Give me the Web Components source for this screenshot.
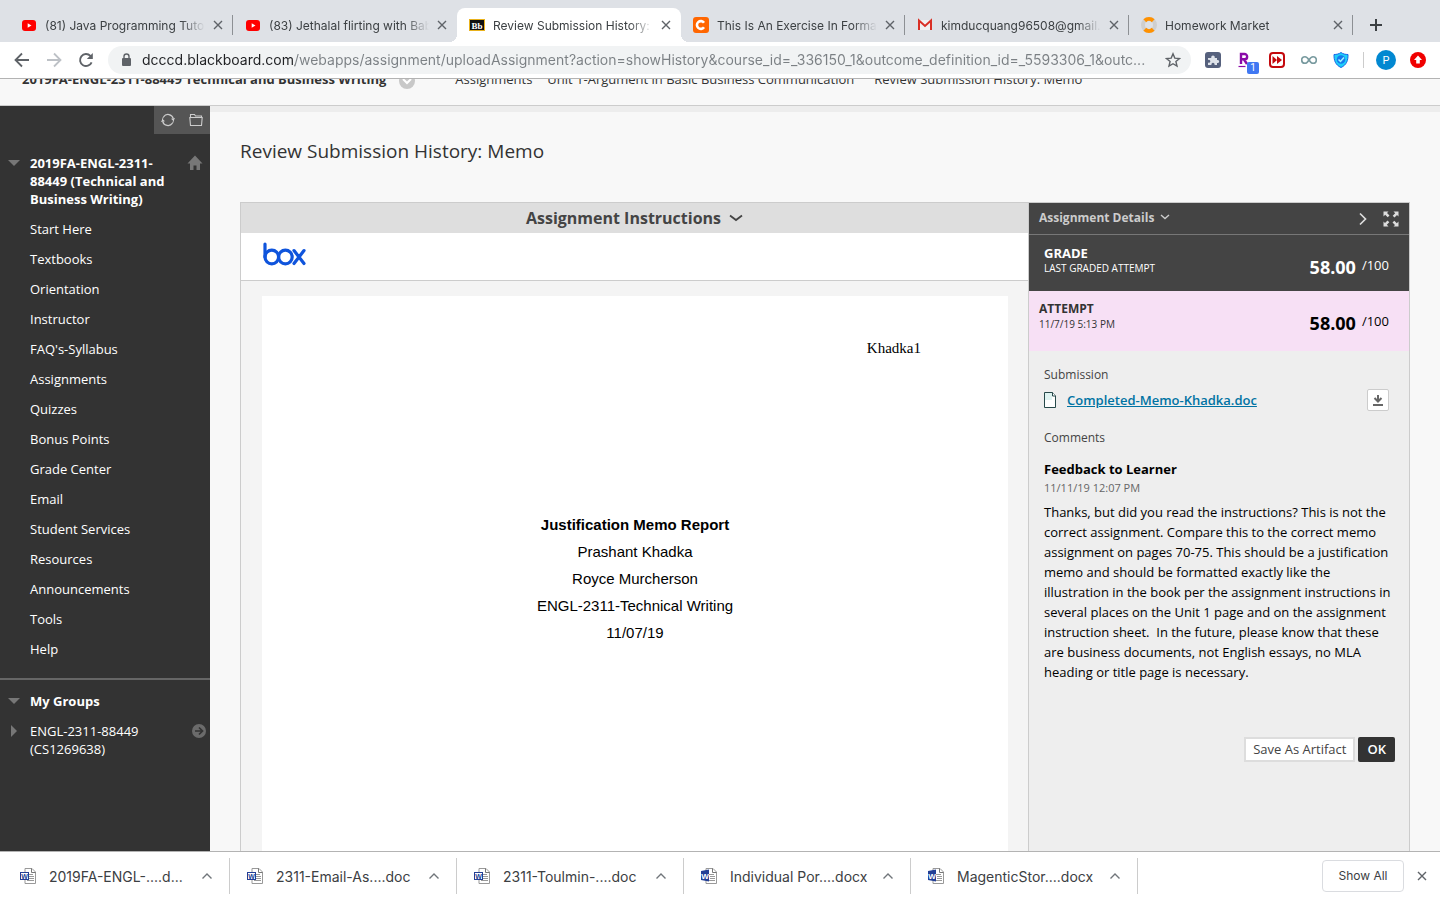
<!DOCTYPE html>
<html lang="en">
<head>
<meta charset="utf-8">
<title>Review Submission History: Memo</title>
<style>
  html, body {
    height: 100%;
    margin: 0;
  }
  body {
    display: flex;
    flex-direction: column;
    overflow: hidden;
    background: #f8f8f8;
    color: #333;
    font-family: "Open Sans", sans-serif;
    font-size: 13px;
    --ui-font: Inter, Roboto, sans-serif;
    --line: #ccc;
  }
  /* no divider next to the active tab */
  browser-tab:has(+ [active]) {
    background: none;
  }
  .viewport {
    flex: 1;
    min-height: 0;
    display: flex;
    flex-direction: column;
    overflow: hidden;
  }
  .columns {
    flex: 1;
    min-height: 0;
    display: flex;
  }
  .content {
    flex: 1;
    min-width: 0;
    display: flex;
    flex-direction: column;
    border-top: 6px solid #ededed;
    padding: 0 30px;
  }
  .content h1 {
    margin: 24px 0 36px;
    font-size: 19px;
    line-height: 30px;
    font-weight: 400;
  }
  .panel {
    flex: 1;
    min-height: 0;
    display: flex;
    border: 1px solid var(--line);
    border-bottom: 0;
  }
</style>
</head>
<body>
  <tab-strip>
    <browser-tab icon="youtube">(81) Java Programming Tuto</browser-tab>
    <browser-tab icon="youtube">(83) Jethalal flirting with Bab</browser-tab>
    <browser-tab icon="bb" active>Review Submission History:</browser-tab>
    <browser-tab icon="chegg">This Is An Exercise In Format</browser-tab>
    <browser-tab icon="gmail">kimducquang96508@gmail.</browser-tab>
    <browser-tab icon="ring">Homework Market</browser-tab>
  </tab-strip>
  <browser-toolbar></browser-toolbar>

  <div class="viewport">
    <course-crumbs></course-crumbs>
    <div class="columns">
      <course-menu></course-menu>
      <main class="content">
        <h1>Review Submission History: Memo</h1>
        <div class="panel">
          <document-viewer>
            <span slot="header">Khadka1</span>
            <strong>Justification Memo Report</strong>
            <span>Prashant Khadka</span>
            <span>Royce Murcherson</span>
            <span>ENGL-2311-Technical Writing</span>
            <span>11/07/19</span>
          </document-viewer>
          <attempt-details>Thanks, but did you read the instructions? This is not the correct assignment. Compare this to the correct memo assignment on pages 70-75. This should be a justification memo and should be formatted exactly like the illustration in the book per the assignment instructions in several places on the Unit 1 page and on the assignment instruction sheet.&nbsp; In the future, please know that these are business documents, not English essays, no MLA heading or title page is necessary.</attempt-details>
        </div>
      </main>
    </div>
  </div>

  <download-shelf>
    <download-item kind="doc">2019FA-ENGL-....d...</download-item>
    <download-item kind="doc">2311-Email-As....doc</download-item>
    <download-item kind="doc">2311-Toulmin-....doc</download-item>
    <download-item kind="docx">Individual Por....docx</download-item>
    <download-item kind="docx">MagenticStor....docx</download-item>
  </download-shelf>

<script>
const sheet = `
  <path d="M5 .5h7l3.500 3.500v11.500H5z" fill="#fff" stroke="#999"/>
  <path d="M11.500.5v4h4" fill="none" stroke="#777"/>
  <path d="M7 6.500h6M9 8.500h5M9 10.500h5M7 12.500h7" stroke="#999"/>`;

// [viewBox, markup]
const ICONS = {
  youtube: ["0 0 16 16", `
    <rect x="1" y="3" width="14" height="11" rx="3" fill="#f00"/>
    <path d="M6.700 6.300v4.400L10.500 8.500z" fill="#fff"/>`],
  bb: ["0 0 16 16", `
    <rect x=".5" y="2.500" width="15" height="11" fill="#111" stroke="#e9b21c"/>
    <text x="8" y="11.500" text-anchor="middle" font-family="Liberation Serif, serif" font-weight="700" font-size="9" fill="#fff">Bb</text>`],
  chegg: ["0 0 16 16", `
    <rect width="16" height="16" rx="3" fill="#f60"/>
    <path d="M11 5.700A3.900 3.900 0 1 0 11 10.300" fill="none" stroke="#fff" stroke-width="2.600"/>`],
  gmail: ["0 0 16 16", `
    <path d="M1 3h14v10H1z" fill="#f1f1f1"/>
    <path d="M2 13V3.500L8 9l6-5.500V13" fill="none" stroke="#d93025" stroke-width="2"/>`],
  ring: ["0 0 16 16", `
    <circle cx="8" cy="8" r="6" fill="none" stroke="#cfcfcf" stroke-width="4"/>
    <path d="M3.800 3.800a6 6 0 0 1 8.400 0M3.800 12.200a6 6 0 0 0 8.400 0" fill="none" stroke="#ff9100" stroke-width="4"/>`],
  close: ["0 0 10 10", `<path d="M1 1l8 8M9 1L1 9" stroke="currentColor" stroke-width="1.400"/>`],
  plus: ["0 0 12 12", `<path d="M6 0v12M0 6h12" stroke="currentColor" stroke-width="2"/>`],
  back: ["0 0 16 16", `<path d="M15 8H2M8 1.500L1.500 8 8 14.500" fill="none" stroke="currentColor" stroke-width="1.800"/>`],
  forward: ["0 0 16 16", `<path d="M1 8h13M8 1.500L14.500 8 8 14.500" fill="none" stroke="currentColor" stroke-width="1.800"/>`],
  reload: ["0 0 16 16", `
    <path d="M13.600 10.300A6 6 0 1 1 12.400 3.900L13.500 5" fill="none" stroke="currentColor" stroke-width="1.900"/>
    <path d="M14.800 1v6H8.800z" fill="currentColor"/>`],
  lock: ["0 0 16 16", `
    <rect x="4" y="6" width="9" height="8" rx="1" fill="currentColor"/>
    <path d="M6 7V4.500a2.500 2.500 0 0 1 5 0V7" fill="none" stroke="currentColor" stroke-width="1.400"/>`],
  star: ["0 0 16 16", `<path d="M8 1.800l1.800 4.300 4.700.4-3.600 3 1.100 4.600L8 11.700l-4 2.400 1.100-4.600-3.600-3 4.700-.4z" fill="none" stroke="currentColor" stroke-width="1.400"/>`],
  puzzle: ["0 0 16 16", `
    <rect width="16" height="16" rx="3" fill="#56617d"/>
    <path d="M3 6h3.300a1.800 1.800 0 1 1 3.400 0H12v2a1.600 1.600 0 1 1 0 3v2H9.500a1.600 1.600 0 1 0-3 0H3v-2.500a1.500 1.500 0 1 0 0-2.500z" fill="#dfe3ea"/>`],
  rakuten: ["0 0 16 16", `
    <path d="M4 12V2h3.500a2.600 2.600 0 0 1 0 5.300H4M7 7.500L10 12" fill="none" stroke="#8a0ba8" stroke-width="2.400"/>
    <path d="M1.500 14.500h7" stroke="#8a0ba8" stroke-width="1.200"/>`],
  video: ["0 0 16 16", `
    <rect x="1" y="1" width="14" height="14" rx="3" fill="#fff" stroke="#c4090d" stroke-width="2"/>
    <path d="M3.500 4v8L8 8zM8 4v8l5-4z" fill="#c4090d"/>`],
  infinity: ["0 0 16 16", `<path d="M8 8C6.500 5.500 5.300 4.700 4 4.700a3.300 3.300 0 0 0 0 6.600c1.300 0 2.500-.8 4-3.300s2.700-3.300 4-3.300a3.300 3.300 0 0 1 0 6.600c-1.300 0-2.500-.8-4-3.300z" fill="none" stroke="#789a9f" stroke-width="1.600"/>`],
  shield: ["0 0 16 16", `
    <path d="M8 .5c2 1.500 4.500 2 7 2 .2 6-1.500 10.500-7 13C2.500 13 .8 8.500 1 2.500c2.500 0 5-.5 7-2z" fill="#1ed0f8" stroke="#1565e8"/>
    <circle cx="8" cy="7.500" r="4.300" fill="#1579ee"/>
    <path d="M5.500 7.500l2 2 3.500-4" fill="none" stroke="#9ff4ff" stroke-width="1.500"/>`],
  avatar: ["0 0 20 20", `
    <circle cx="10" cy="10" r="10" fill="#0288d1"/>
    <text x="10" y="14" text-anchor="middle" font-family="Roboto, sans-serif" font-size="11" fill="#fff">P</text>`],
  update: ["0 0 16 16", `
    <circle cx="8" cy="8" r="8" fill="#f00000"/>
    <path d="M8 3.500L12 8H9.800v3.500H6.200V8H4z" fill="#fff"/>`],
  refresh: ["0 0 14 14", `
    <path d="M11.500 10.200A5.500 5.500 0 0 1 1.700 8.500M2.500 3.800A5.500 5.500 0 0 1 12.300 5.500" fill="none" stroke="currentColor" stroke-width="1.200"/>
    <path d="M0 9l1.500-3L4 8.200zM14 5l-1.500 3L10 5.800z" fill="currentColor"/>
    <path d="M1.500 7A5.500 5.500 0 0 1 2.500 3.800M12.500 7a5.500 5.500 0 0 1-1 3.200" fill="none" stroke="currentColor"/>`],
  folder: ["0 0 14 14", `<path d="M1.500 12.500L.8 4.500h12.400l-.7 8zM1.500 4.500v-3h4l1 1.500h6v1.500" fill="none" stroke="currentColor" stroke-width="1.100"/>`],
  home: ["0 0 16 16", `<path d="M8 .5l7.500 8H13V15H9.500v-4.500h-3V15H3V8.500H.5z" fill="currentColor"/>`],
  down: ["0 0 12 6", `<path d="M0 0h12L6 6z" fill="currentColor"/>`],
  right: ["0 0 6 12", `<path d="M0 0v12l6-6z" fill="currentColor"/>`],
  goto: ["0 0 14 14", `
    <circle cx="7" cy="7" r="7" fill="#6b6b6b"/>
    <path d="M3 7h7M7 3.500L10.500 7 7 10.500" fill="none" stroke="#333" stroke-width="1.700"/>`],
  chevdown: ["0 0 14 8", `<path d="M1 1.500l6 4.500 6-4.500" fill="none" stroke="currentColor" stroke-width="1.800"/>`],
  chevsmall: ["0 0 10 6", `<path d="M1 1l4 3.500L9 1" fill="none" stroke="currentColor" stroke-width="1.400"/>`],
  chevright: ["0 0 8 14", `<path d="M1 1.500L6.500 7 1 12.500" fill="none" stroke="currentColor" stroke-width="1.700"/>`],
  chevup: ["0 0 10 6", `<path d="M.5 5.500L5 1l4.500 4.500" fill="none" stroke="#70757a" stroke-width="1.400"/>`],
  crumbmenu: ["0 0 16 16", `
    <circle cx="8" cy="8" r="8" fill="#c8c8c8"/>
    <path d="M4 6l4 4 4-4" fill="none" stroke="#fff" stroke-width="2"/>`],
  expand: ["0 0 16 16", `
    <g fill="currentColor">
      <path d="M.5.500h5L4 2l2.500 2.500-1.800 1.800L2.200 3.800.5 5.500z"/>
      <path d="M15.500.500v5L14 4l-2.500 2.500-1.800-1.800 2.500-2.500L10.500.5z"/>
      <path d="M.5 15.500v-5L2 12l2.500-2.500 1.800 1.800-2.500 2.500 1.700 1.700z"/>
      <path d="M15.500 15.500h-5L12 14l-2.500-2.500 1.800-1.800 2.500 2.500 1.700-1.700z"/>
    </g>`],
  file: ["0 0 14 18", `
    <path d="M1.500 1.500h8L12.500 5v11.500h-11z" fill="#fff" stroke="#27494a"/>
    <path d="M2 2h7v7H2z" fill="#dff3f1"/>
    <path d="M9.500 1.500V5h3" fill="#fff" stroke="#27494a"/>`],
  download: ["0 0 12 12", `
    <path d="M6 1v6M2.500 4L6 7.500 9.500 4" fill="none" stroke="currentColor" stroke-width="2"/>
    <path d="M1 11h10" stroke="currentColor" stroke-width="2"/>`],
  box: ["0 0 43 24", `
    <g fill="none" stroke="#0f54dc" stroke-width="3.200" stroke-linecap="round">
      <path d="M2 2v13"/>
      <circle cx="8.800" cy="15" r="6.800"/>
      <circle cx="22.400" cy="15" r="6.800"/>
      <path d="M31 8.600L41 21.500M41 8.600L31 21.500"/>
    </g>`],
  doc: ["0 0 16 16", sheet + `
    <rect x=".5" y="4.500" width="8" height="7" fill="#fff" stroke="#233f95"/>
    <text x="4.500" y="10.500" text-anchor="middle" font-family="Liberation Sans, sans-serif" font-weight="700" font-size="7" fill="#233f95">W</text>`],
  docx: ["0 0 16 16", sheet + `
    <path d="M0 3l8-1.500v12L0 12z" fill="#233f95"/>
    <text x="4" y="10.500" text-anchor="middle" font-family="Liberation Sans, sans-serif" font-weight="700" font-size="8" fill="#fff">W</text>`],
};

function shadow(el, html) {
  el.attachShadow({ mode: "open" }).innerHTML = html;
}

// Shared by every shadow root that holds buttons or links
const RESET = `
  button {
    display: inline-flex;
    align-items: center;
    justify-content: center;
    margin: 0;
    padding: 0;
    border: 0;
    background: none;
    color: inherit;
    font: inherit;
    cursor: pointer;
  }
  a { color: inherit; text-decoration: none; }
`;

class UiIcon extends HTMLElement {
  connectedCallback() {
    if (this.shadowRoot) return;
    const [box, markup] = ICONS[this.getAttribute("name")];
    const [, , w, h] = box.split(" ");
    shadow(this, `
      <style>
        :host { display: inline-flex; flex: none; }
        svg { display: block; }
      </style>
      <svg viewBox="${box}" width="${w}" height="${h}" aria-hidden="true">${markup}</svg>
    `);
  }
}

class BrowserTab extends HTMLElement {
  connectedCallback() {
    shadow(this, `
      <style>
        ${RESET}
        :host {
          position: relative;
          flex: 0 1 224px;
          min-width: 0;
          box-sizing: border-box;
          display: flex;
          align-items: center;
          gap: 8px;
          height: 34px;
          padding: 0 10px 0 12px;
          color: #3c4043;
          font-family: var(--ui-font);
          font-size: 12px;
          background: linear-gradient(#8d9094, #8d9094) right center / 1px 20px no-repeat;
        }
        :host([active]) {
          background: #fff;
          border-radius: 8px 8px 0 0;
        }
        /* curved feet of the active tab */
        :host([active])::before,
        :host([active])::after {
          content: "";
          position: absolute;
          bottom: 0;
          width: 8px;
          height: 8px;
        }
        :host([active])::before {
          right: 100%;
          background: radial-gradient(circle at 0 0, #dee1e6 8px, #fff 8px);
        }
        :host([active])::after {
          left: 100%;
          background: radial-gradient(circle at 100% 0, #dee1e6 8px, #fff 8px);
        }
        .title {
          flex: 1;
          min-width: 0;
          overflow: hidden;
          white-space: nowrap;
          -webkit-mask-image: linear-gradient(to right, #000 calc(100% - 24px), transparent);
          mask-image: linear-gradient(to right, #000 calc(100% - 24px), transparent);
        }
        button { color: #5f6368; }
      </style>
      <ui-icon name="${this.getAttribute("icon")}"></ui-icon>
      <span class="title"><slot></slot></span>
      <button aria-label="Close tab"><ui-icon name="close"></ui-icon></button>
    `);
  }
}

class TabStrip extends HTMLElement {
  connectedCallback() {
    shadow(this, `
      <style>
        ${RESET}
        :host {
          display: flex;
          align-items: center;
          padding: 8px 8px 0 9px;
          background: #dee1e6;
        }
        button { width: 46px; height: 34px; color: #3c4043; }
      </style>
      <slot></slot>
      <button aria-label="New tab"><ui-icon name="plus"></ui-icon></button>
    `);
  }
}

class BrowserToolbar extends HTMLElement {
  connectedCallback() {
    shadow(this, `
      <style>
        ${RESET}
        :host {
          display: flex;
          align-items: center;
          height: 36px;
          padding: 0 6px;
          background: #fff;
          border-bottom: 1px solid #b3b3b3;
          color: #5f6368;
        }
        button { position: relative; flex: none; width: 32px; height: 32px; }
        button:disabled { color: #bdc1c6; }
        .omnibox {
          flex: 1;
          min-width: 0;
          display: flex;
          align-items: center;
          gap: 8px;
          height: 28px;
          margin: 0 6px;
          padding: 0 2px 0 10px;
          border-radius: 14px;
          background: #f1f3f4;
        }
        input {
          flex: 1;
          min-width: 0;
          padding: 0;
          border: 0;
          outline: 0;
          font-family: var(--ui-font);
          font-size: 14px;
          line-height: 20px;
          color: #7b8084;
          /* host name dark, path grey */
          background: linear-gradient(to right, #202124 153px, #7b8084 153px);
          -webkit-background-clip: text;
          background-clip: text;
          -webkit-text-fill-color: transparent;
        }
        .badge {
          position: absolute;
          right: 2px;
          bottom: 2px;
          width: 12px;
          height: 12px;
          border-radius: 2px;
          background: #4078f2;
          color: #fff;
          font: 10px/12px Roboto, sans-serif;
        }
        hr { width: 1px; height: 16px; margin: 0 6px; border: 0; background: #ccc; }
      </style>
      <button aria-label="Back"><ui-icon name="back"></ui-icon></button>
      <button aria-label="Forward" disabled><ui-icon name="forward"></ui-icon></button>
      <button aria-label="Reload"><ui-icon name="reload"></ui-icon></button>
      <div class="omnibox">
        <ui-icon name="lock"></ui-icon>
        <input type="text" aria-label="Address" spellcheck="false" value="dcccd.blackboard.com/webapps/assignment/uploadAssignment?action=showHistory&amp;course_id=_336150_1&amp;outcome_definition_id=_5593306_1&amp;outc...">
        <button aria-label="Bookmark"><ui-icon name="star"></ui-icon></button>
      </div>
      <button aria-label="Extensions"><ui-icon name="puzzle"></ui-icon></button>
      <button aria-label="Rakuten"><ui-icon name="rakuten"></ui-icon><span class="badge">1</span></button>
      <button aria-label="Video"><ui-icon name="video"></ui-icon></button>
      <button aria-label="Loop"><ui-icon name="infinity"></ui-icon></button>
      <button aria-label="Protection"><ui-icon name="shield"></ui-icon></button>
      <hr>
      <button aria-label="Profile"><ui-icon name="avatar"></ui-icon></button>
      <button aria-label="Update"><ui-icon name="update"></ui-icon></button>
    `);
  }
}

// The page is scrolled, so only the lower part of the trail shows
class CourseCrumbs extends HTMLElement {
  connectedCallback() {
    shadow(this, `
      <style>
        ${RESET}
        :host {
          flex: none;
          display: flex;
          align-items: flex-end;
          height: 26px;
          overflow: hidden;
          border-bottom: 1px solid var(--line);
          background: #f8f8f8;
        }
        nav {
          display: flex;
          align-items: center;
          height: 20px;
          padding: 0 22px 16px;
          white-space: nowrap;
        }
        button { margin: 0 40px 0 13px; padding-top: 4px; }
        a + a { margin-left: 15px; }
        a:last-child { margin-left: 20px; }
      </style>
      <nav>
        <a href="#"><b>2019FA-ENGL-2311-88449 Technical and Business Writing</b></a>
        <button aria-label="Course options"><ui-icon name="crumbmenu"></ui-icon></button>
        <a href="#">Assignments</a>
        <a href="#">Unit 1-Argument in Basic Business Communication</a>
        <a href="#">Review Submission History: Memo</a>
      </nav>
    `);
  }
}

class CourseMenu extends HTMLElement {
  connectedCallback() {
    const links = [
      "Start Here", "Textbooks", "Orientation", "Instructor", "FAQ's-Syllabus",
      "Assignments", "Quizzes", "Bonus Points", "Grade Center", "Email",
      "Student Services", "Resources", "Announcements", "Tools", "Help",
    ];
    shadow(this, `
      <style>
        ${RESET}
        :host {
          flex: none;
          width: 210px;
          background: #333;
          color: #fff;
          line-height: 18px;
        }
        .tools {
          display: flex;
          width: 56px;
          height: 28px;
          margin: 0 0 20px auto;
          background: #555;
          color: #ccc;
        }
        .tools button { flex: 1; }
        .head {
          display: grid;
          grid-template-columns: 30px 1fr 40px;
          color: #777;
        }
        .head a { color: #fff; }
        .head > button { height: 18px; }
        .head > button:first-child { padding-right: 2px; }
        .head > button:last-child { padding-left: 10px; }
        .head.group > button:last-child { padding-left: 18px; }
        b { font-size: 13px; }
        ul { margin: 0; padding: 6px 0 14px; list-style: none; }
        li { padding: 6px 30px; }
        .groups {
          display: grid;
          gap: 12px;
          padding-top: 12px;
          border-top: 2px solid #666;
        }
      </style>
      <div class="tools">
        <button aria-label="Refresh"><ui-icon name="refresh"></ui-icon></button>
        <button aria-label="Folder view"><ui-icon name="folder"></ui-icon></button>
      </div>
      <div class="head">
        <button aria-label="Collapse"><ui-icon name="down"></ui-icon></button>
        <a href="#"><b>2019FA-ENGL-2311-88449 (Technical and Business Writing)</b></a>
        <button aria-label="Home"><ui-icon name="home"></ui-icon></button>
      </div>
      <ul>${links.map((l) => `<li><a href="#">${l}</a></li>`).join("")}</ul>
      <div class="groups">
        <div class="head">
          <button aria-label="Collapse"><ui-icon name="down"></ui-icon></button>
          <b><a href="#">My Groups</a></b>
        </div>
        <div class="head group">
          <button aria-label="Expand"><ui-icon name="right"></ui-icon></button>
          <a href="#">ENGL-2311-88449 (CS1269638)</a>
          <button aria-label="Open group"><ui-icon name="goto"></ui-icon></button>
        </div>
      </div>
    `);
  }
}

class DocumentViewer extends HTMLElement {
  connectedCallback() {
    shadow(this, `
      <style>
        ${RESET}
        :host {
          flex: 1;
          min-width: 0;
          display: flex;
          flex-direction: column;
          background: #f4f4f4;
        }
        .instructions {
          gap: 8px;
          height: 30px;
          background: #dedede;
          color: #444;
          font-size: 16px;
          font-weight: 700;
        }
        .brand {
          padding: 9px 22px 14px;
          border-bottom: 1px solid var(--line);
          background: #fff;
        }
        .brand ui-icon { display: flex; }
        .page {
          flex: 1;
          margin: 15px 20px 0 21px;
          padding: 42px 87px 0;
          background: #fff;
          color: #000;
        }
        header {
          margin-bottom: 153px;
          text-align: right;
          font: 15px/20px "Liberation Serif", serif;
        }
        .body {
          display: flex;
          flex-direction: column;
          align-items: center;
          font: 15px/27px "Liberation Sans", sans-serif;
        }
      </style>
      <button class="instructions">Assignment Instructions <ui-icon name="chevdown"></ui-icon></button>
      <div class="brand"><ui-icon name="box"></ui-icon></div>
      <article class="page">
        <header><slot name="header"></slot></header>
        <div class="body"><slot></slot></div>
      </article>
    `);
  }
}

class ScoreRow extends HTMLElement {
  connectedCallback() {
    shadow(this, `
      <style>
        :host {
          display: flex;
          justify-content: space-between;
          padding: 10px 20px 0 15px;
          line-height: 16px;
        }
        b, small { display: block; }
        b { font-size: var(--label-size, 12px); }
        small { font-size: 10px; line-height: 14px; }
        .score {
          display: flex;
          gap: 6px;
          padding-top: 11px;
          color: var(--score-color, inherit);
          line-height: 18px;
        }
        .score b { padding-top: 2px; font-size: 18px; line-height: 18px; }
      </style>
      <div>
        <b>${this.getAttribute("label")}</b>
        <small><slot></slot></small>
      </div>
      <div class="score"><b>${this.getAttribute("score")}</b><span>/${this.getAttribute("total")}</span></div>
    `);
  }
}

class AttemptDetails extends HTMLElement {
  connectedCallback() {
    shadow(this, `
      <style>
        ${RESET}
        :host {
          flex: none;
          width: 380px;
          border-left: 1px solid var(--line);
          background: #eee;
        }
        .bar {
          display: flex;
          align-items: center;
          height: 31px;
          padding: 0 10px;
          border-bottom: 1px solid #777;
          background: #444;
          color: #ccc;
        }
        .bar button { gap: 6px; font-size: 12px; font-weight: 700; }
        .bar button:first-child { margin-right: auto; padding-bottom: 3px; }
        .bar button:last-child { margin-left: 16px; }
        .bar button + button { color: #ddd; }
        .grade { --label-size: 13px; height: 46px; background: #444; color: #fff; }
        .attempt {
          --score-color: #000;
          height: 50px;
          padding-left: 10px;
          background: #f7e0f5;
        }
        .body { padding: 14px 15px; color: #000; line-height: 20px; }
        .body h3 {
          margin: 0;
          font-size: 12px;
          font-weight: 400;
          color: #444;
        }
        .file {
          display: flex;
          align-items: center;
          gap: 10px;
          margin: 4px 5px 17px -1px;
        }
        .file a {
          flex: 1;
          color: #0073a3;
          font-weight: 600;
          text-decoration: underline;
        }
        .file button {
          box-sizing: border-box;
          width: 22px;
          height: 22px;
          border: 1px solid #ccc;
          border-radius: 2px;
          background: #fff;
          color: #666;
        }
        h4 { margin: 11px 0 0; font-size: 13px; font-weight: 700; }
        time { display: block; font-size: 11px; line-height: 18px; color: #666; }
        p { margin: 5px 0 55px; }
        .actions { display: flex; justify-content: flex-end; gap: 3px; margin-right: -1px; }
        .actions button {
          box-sizing: border-box;
          height: 25px;
          padding: 0 7px 2px;
          border: 2px solid #ddd;
          background: #fff;
          color: #444;
        }
        .actions .ok {
          border-color: #333;
          border-radius: 2px;
          background: #333;
          color: #fff;
          font-weight: 600;
        }
      </style>
      <div class="bar">
        <button>Assignment Details <ui-icon name="chevsmall"></ui-icon></button>
        <button aria-label="Next"><ui-icon name="chevright"></ui-icon></button>
        <button aria-label="Full screen"><ui-icon name="expand"></ui-icon></button>
      </div>
      <score-row class="grade" label="GRADE" score="58.00" total="100">LAST GRADED ATTEMPT</score-row>
      <score-row class="attempt" label="ATTEMPT" score="58.00" total="100">11/7/19 5:13 PM</score-row>
      <div class="body">
        <h3>Submission</h3>
        <div class="file">
          <ui-icon name="file"></ui-icon>
          <a href="#">Completed-Memo-Khadka.doc</a>
          <button aria-label="Download"><ui-icon name="download"></ui-icon></button>
        </div>
        <h3>Comments</h3>
        <h4>Feedback to Learner</h4>
        <time>11/11/19 12:07 PM</time>
        <p><slot></slot></p>
        <div class="actions">
          <button>Save As Artifact</button>
          <button class="ok">OK</button>
        </div>
      </div>
    `);
  }
}

class DownloadItem extends HTMLElement {
  connectedCallback() {
    shadow(this, `
      <style>
        ${RESET}
        :host {
          flex: 0 1 227px;
          min-width: 0;
          box-sizing: border-box;
          display: flex;
          align-items: center;
          height: 36px;
          padding: 0 17px;
          border-right: 1px solid #ccc;
        }
        .name {
          flex: 1;
          min-width: 0;
          gap: 13px;
          justify-content: flex-start;
          white-space: nowrap;
        }
      </style>
      <button class="name"><ui-icon name="${this.getAttribute("kind")}"></ui-icon><slot></slot></button>
      <button aria-label="Options"><ui-icon name="chevup"></ui-icon></button>
    `);
  }
}

class DownloadShelf extends HTMLElement {
  connectedCallback() {
    shadow(this, `
      <style>
        ${RESET}
        :host {
          flex: none;
          display: flex;
          align-items: center;
          height: 48px;
          padding: 0 13px 0 3px;
          border-top: 1px solid #b3b3b3;
          background: #fff;
          color: #3c4043;
          font-family: var(--ui-font);
          font-size: 14px;
        }
        button { color: #5f6368; }
        .all {
          box-sizing: border-box;
          width: 82px;
          height: 32px;
          margin: 0 13px 0 auto;
          padding-bottom: 2px;
          border: 1px solid #dadce0;
          border-radius: 4px;
          color: #3c4043;
          font-size: 12px;
        }
      </style>
      <slot></slot>
      <button class="all">Show All</button>
      <button aria-label="Close"><ui-icon name="close"></ui-icon></button>
    `);
  }
}

customElements.define("ui-icon", UiIcon);
customElements.define("browser-tab", BrowserTab);
customElements.define("tab-strip", TabStrip);
customElements.define("browser-toolbar", BrowserToolbar);
customElements.define("course-crumbs", CourseCrumbs);
customElements.define("course-menu", CourseMenu);
customElements.define("document-viewer", DocumentViewer);
customElements.define("score-row", ScoreRow);
customElements.define("attempt-details", AttemptDetails);
customElements.define("download-item", DownloadItem);
customElements.define("download-shelf", DownloadShelf);
</script>
</body>
</html>
